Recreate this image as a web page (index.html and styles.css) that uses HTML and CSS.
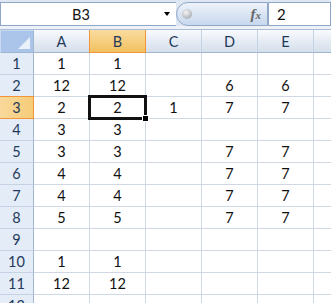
FILE: index.html
```html
<!DOCTYPE html>
<html lang="en">
<head>
    <meta charset="UTF-8">
    <title>Book1 - B3</title>
    <link rel="stylesheet" href="styles.css">
</head>
<body>
    <div class="formula-bar">
        <div class="name-box">
            <span class="name">B3</span>
            <span class="drop"></span>
        </div>
        <div class="fx-pill">
            <span class="knob"></span>
            <span class="fx">f<small>x</small></span>
        </div>
        <div class="formula-input">2</div>
    </div>
    <div class="bar-gap"></div>

    <div class="sheet">
        <div class="corner"><span class="tri"></span></div>
        <div class="col-head">A</div>
        <div class="col-head sel">B</div>
        <div class="col-head">C</div>
        <div class="col-head">D</div>
        <div class="col-head">E</div>
        <div class="col-head"></div>

        <div class="row-head">1</div>
        <div class="cell">1</div><div class="cell">1</div><div class="cell"></div><div class="cell"></div><div class="cell"></div><div class="cell"></div>

        <div class="row-head">2</div>
        <div class="cell">12</div><div class="cell">12</div><div class="cell"></div><div class="cell">6</div><div class="cell">6</div><div class="cell"></div>

        <div class="row-head sel">3</div>
        <div class="cell">2</div>
        <div class="cell active">2<span class="active-box"><span class="handle"></span></span></div>
        <div class="cell">1</div><div class="cell">7</div><div class="cell">7</div><div class="cell"></div>

        <div class="row-head">4</div>
        <div class="cell">3</div><div class="cell">3</div><div class="cell"></div><div class="cell"></div><div class="cell"></div><div class="cell"></div>

        <div class="row-head">5</div>
        <div class="cell">3</div><div class="cell">3</div><div class="cell"></div><div class="cell">7</div><div class="cell">7</div><div class="cell"></div>

        <div class="row-head">6</div>
        <div class="cell">4</div><div class="cell">4</div><div class="cell"></div><div class="cell">7</div><div class="cell">7</div><div class="cell"></div>

        <div class="row-head">7</div>
        <div class="cell">4</div><div class="cell">4</div><div class="cell"></div><div class="cell">7</div><div class="cell">7</div><div class="cell"></div>

        <div class="row-head">8</div>
        <div class="cell">5</div><div class="cell">5</div><div class="cell"></div><div class="cell">7</div><div class="cell">7</div><div class="cell"></div>

        <div class="row-head">9</div>
        <div class="cell"></div><div class="cell"></div><div class="cell"></div><div class="cell"></div><div class="cell"></div><div class="cell"></div>

        <div class="row-head">10</div>
        <div class="cell">1</div><div class="cell">1</div><div class="cell"></div><div class="cell"></div><div class="cell"></div><div class="cell"></div>

        <div class="row-head">11</div>
        <div class="cell">12</div><div class="cell">12</div><div class="cell"></div><div class="cell"></div><div class="cell"></div><div class="cell"></div>

        <div class="row-head">12</div>
        <div class="cell"></div><div class="cell"></div><div class="cell"></div><div class="cell"></div><div class="cell"></div><div class="cell"></div>
    </div>
</body>
</html>
```

FILE: styles.css
```css
body {
    margin: 0;
    width: 331px;
    height: 303px;
    overflow: hidden;
    background: #fff;
    font-family: 'Lato', 'Liberation Sans', sans-serif;
    font-size: 14.5px;
    color: #111;
}

/* formula bar */
.formula-bar {
    display: flex;
    height: 26px;
    width: 331px;
    padding-top: 2px;
    box-sizing: border-box;
    background: #dfe7f3;
    overflow: hidden;
}
.name-box {
    width: 176px;
    flex: none;
    display: flex;
    align-items: center;
    background: #fff;
    border: 1px solid #8fa8c8;
    border-right: none;
    box-sizing: border-box;
}
.name {
    width: 160px;
    text-align: center;
    color: #111;
}
.drop {
    width: 0;
    height: 0;
    border-left: 3px solid transparent;
    border-right: 3px solid transparent;
    border-top: 4px solid #000;
    margin-left: 3px;
}
.fx-pill {
    position: relative;
    width: 92px;
    flex: none;
    box-sizing: border-box;
    border: 1px solid #8fa8c8;
    border-radius: 12px 0 0 12px;
    background: linear-gradient(#eef3fa, #dae5f3 50%, #c8d8ee);
    display: flex;
    align-items: center;
    justify-content: flex-end;
    padding-right: 6px;
}
.knob {
    position: absolute;
    left: 5px;
    top: 6px;
    width: 10px;
    height: 10px;
    border-radius: 50%;
    background: radial-gradient(circle at 40% 35%, #f6f6f6, #b4b9c0 65%, #959ca5);
}
.fx {
    font-family: 'Liberation Serif', serif;
    font-style: italic;
    font-weight: bold;
    color: #666;
    font-size: 15px;
}
.fx small {
    font-size: 11px;
}
.formula-input {
    flex: 1;
    background: #fff;
    border: 1px solid #8fa8c8;
    box-sizing: border-box;
    padding-left: 8px;
    display: flex;
    align-items: center;
    font-size: 15px;
}
.bar-gap {
    height: 3px;
    background: #eef2f8;
    border-bottom: 1px solid #a9bdd6;
}

/* grid */
.sheet {
    display: grid;
    grid-template-columns: 34px repeat(6, 56px);
    grid-template-rows: 23px repeat(12, 22px);
    width: 331px;
    overflow: hidden;
}
.sheet > div {
    box-sizing: border-box;
    display: flex;
    align-items: center;
    justify-content: center;
}
.corner {
    position: relative;
    background: #aac5e9;
    border: 1px solid #c9dbf2;
    border-right: 1px solid #9eb6ce;
    border-bottom: 1px solid #9eb6ce;
}
.tri {
    position: absolute;
    right: 3px;
    bottom: 3px;
    width: 0;
    height: 0;
    border-left: 12px solid transparent;
    border-bottom: 12px solid #eaf1fa;
}
.col-head {
    background: linear-gradient(#f9fbfd, #e4eaf3 55%, #d6dfec);
    border-right: 1px solid #c5d2e3;
    border-bottom: 1px solid #9eb6ce;
    color: #1f3a5c;
    padding-top: 1px;
}
.col-head.sel {
    background: linear-gradient(#f9dca0, #f5cd7c 55%, #f1c15f);
    border-right: 1px solid #f29536;
    border-bottom: 1px solid #f29536;
    box-shadow: -1px 0 0 #f29536;
}
.row-head {
    background: #e4ecf7;
    border-right: 1px solid #9eb6ce;
    border-bottom: 1px solid #c5d2e3;
    color: #1f3a5c;
}
.row-head.sel {
    background: linear-gradient(90deg, #f9d99b, #f5cc78);
    border-bottom: 1px solid #f29536;
    border-right: 1px solid #f29536;
    box-shadow: 0 -1px 0 #f29536;
}
.cell {
    border-right: 1px solid #d0d7e5;
    border-bottom: 1px solid #d0d7e5;
}

/* active cell */
.cell.active {
    position: relative;
}
.active-box {
    position: absolute;
    left: -2px;
    top: -2px;
    right: -2px;
    bottom: -2px;
    border: 3px solid #111;
}
.handle {
    position: absolute;
    right: -5px;
    bottom: -5px;
    width: 5px;
    height: 5px;
    background: #000;
    border: 1px solid #fff;
}
```
